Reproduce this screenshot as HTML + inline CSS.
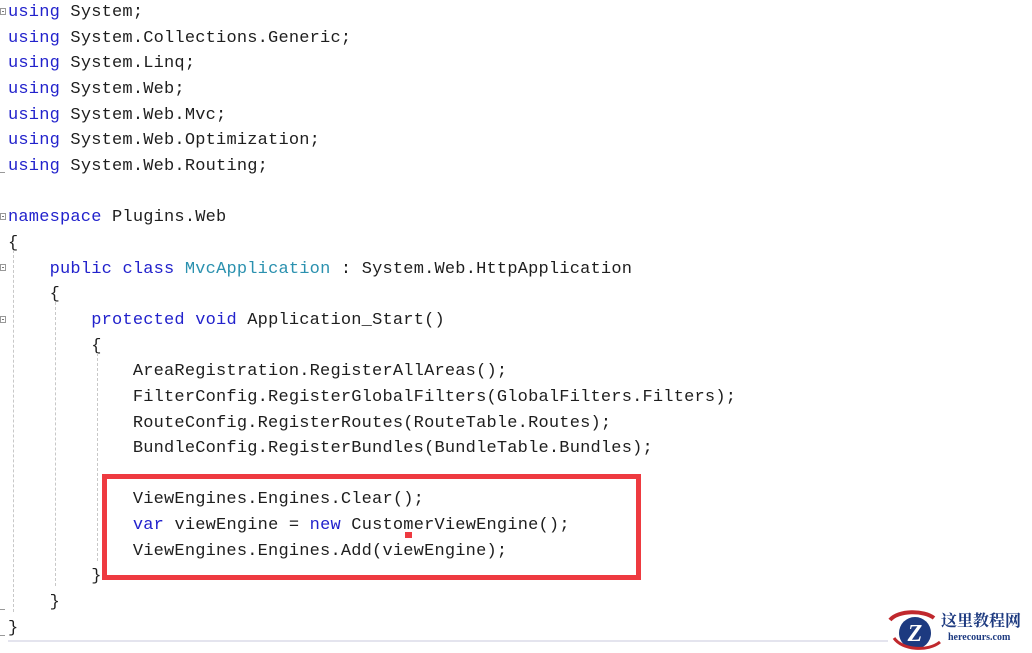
<!DOCTYPE html>
<html><head><meta charset="utf-8"><style>
html,body{margin:0;padding:0;background:#fff;width:1032px;height:653px;overflow:hidden;position:relative}
.code{position:absolute;left:8px;top:0px;font-family:"Liberation Mono",monospace;font-size:17px;letter-spacing:0.2px;line-height:25.65px;color:#1e1e1e;white-space:pre}
.k{color:#2222cc}.t{color:#2b91af}
.g{position:absolute;width:0;border-left:1px dashed #c8c8c8}
.f{position:absolute;left:0;width:6px;height:7px;border:1px solid #999;box-sizing:border-box}
.f:after{content:"";position:absolute;left:1px;top:2px;width:2px;height:1px;background:#777}
.box{position:absolute;left:102px;top:474px;width:539px;height:106px;border:5px solid #ee3a40;box-sizing:border-box}
</style></head><body>
<div class="code"><span class="k">using</span> System;
<span class="k">using</span> System.Collections.Generic;
<span class="k">using</span> System.Linq;
<span class="k">using</span> System.Web;
<span class="k">using</span> System.Web.Mvc;
<span class="k">using</span> System.Web.Optimization;
<span class="k">using</span> System.Web.Routing;

<span class="k">namespace</span> Plugins.Web
{
    <span class="k">public</span> <span class="k">class</span> <span class="t">MvcApplication</span> : System.Web.HttpApplication
    {
        <span class="k">protected</span> <span class="k">void</span> Application_Start()
        {
            AreaRegistration.RegisterAllAreas();
            FilterConfig.RegisterGlobalFilters(GlobalFilters.Filters);
            RouteConfig.RegisterRoutes(RouteTable.Routes);
            BundleConfig.RegisterBundles(BundleTable.Bundles);

            ViewEngines.Engines.Clear();
            <span class="k">var</span> viewEngine = <span class="k">new</span> CustomerViewEngine();
            ViewEngines.Engines.Add(viewEngine);
        }
    }
}</div>
<div class="f" style="top:8px"></div>
<div class="f" style="top:213px"></div>
<div class="f" style="top:264px"></div>
<div class="f" style="top:316px"></div>
<div style="position:absolute;left:0;top:172px;width:5px;height:1px;background:#999"></div>
<div style="position:absolute;left:0;top:609px;width:5px;height:1px;background:#999"></div>
<div style="position:absolute;left:0;top:635px;width:5px;height:1px;background:#999"></div>
<div class="g" style="left:13px;top:250px;height:362px"></div>
<div class="g" style="left:55px;top:302px;height:284px"></div>
<div class="g" style="left:97px;top:353px;height:208px"></div>
<div class="box"></div>
<div style="position:absolute;left:405px;top:532px;width:7px;height:6px;background:#ee3a40"></div>
<div style="position:absolute;left:8px;top:640px;width:880px;height:2px;background:#e4e4ee"></div>
<svg style="position:absolute;left:884px;top:608px" width="60" height="44" viewBox="0 0 60 44">
<path d="M6 12 C14 2 40 2 50 10" stroke="#c0282d" stroke-width="4" fill="none"/>
<circle cx="31" cy="25" r="16" fill="#1d3a80"/>
<text x="31" y="33" font-family="Liberation Serif,serif" font-weight="bold" font-style="italic" font-size="24" fill="#fff" text-anchor="middle">Z</text>
<path d="M10 30 C18 42 44 44 56 34" stroke="#c0282d" stroke-width="3" fill="none"/>
</svg>
<div style="position:absolute;left:941px;top:611px;font-family:'Noto Serif CJK SC',serif;font-weight:bold;font-size:16px;color:#1d3a80;line-height:18px">这里教程网</div>
<div style="position:absolute;left:948px;top:632px;font-family:'Liberation Serif',serif;font-weight:bold;font-size:10px;color:#1d3a80">herecours.com</div>
</body></html>
